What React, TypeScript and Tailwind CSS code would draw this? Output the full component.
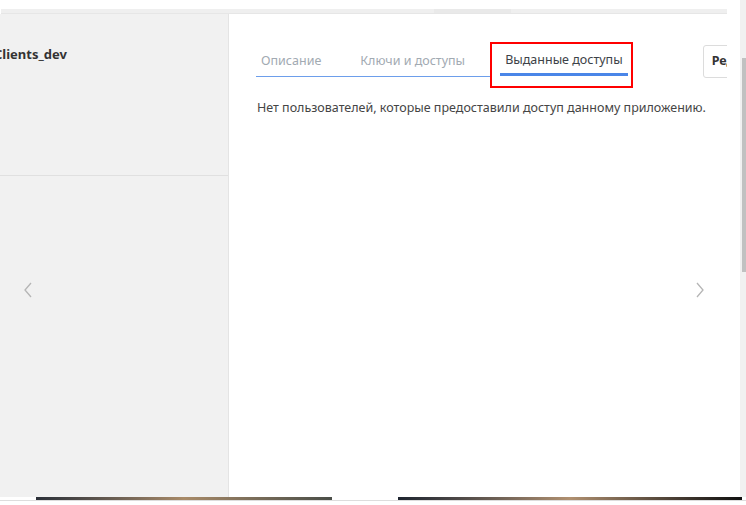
export default function App() {
    const tabs = ["Описание", "Ключи и доступы"]

    return (
        <div className="relative w-[746px] h-[505px] overflow-hidden bg-white text-[12.5px] text-[#444]" style={{ fontFamily: '"Noto Sans", "Open Sans", sans-serif' }}>
            <div className="flex h-[497px]">
                <div className="flex flex-col w-[740px]">
                    <div className="h-[9px]" />
                    <div className="flex ml-[1px] w-[726px] h-[5px] bg-[#efefef] border-b border-[#e6e6e6]">
                        <div className="ml-[433px] w-[77px] h-full bg-[#e9e9e9]" />
                    </div>
                    <div className="flex flex-1 min-h-0">
                        {/* left panel */}
                        <div className="flex flex-col w-[229px] bg-[#f1f1f1] border-r border-[#e4e4e4]">
                            <div className="h-[162px] border-b border-[#e0e0e0]">
                                <div className="ml-[-6px] mt-[31px] font-bold text-[13px] text-[#333] leading-[18px]">Clients_dev</div>
                            </div>
                            <div className="flex flex-1 items-start pl-[23px] pt-[106px]">
                                <svg width="10" height="16" viewBox="0 0 10 16" fill="none" stroke="#b5b5b5" strokeWidth="1.3">
                                    <polyline points="8,1 2,8 8,15" />
                                </svg>
                            </div>
                        </div>

                        {/* main panel */}
                        <div className="relative flex flex-col w-[498px] overflow-hidden">
                            <div className="flex items-start pt-[31px] pl-[27px]">
                                <div className="flex items-end">
                                    <div className="flex gap-[29px] pr-[20px] border-b border-[#6d9eeb]">
                                        {tabs.map((t) => (
                                            <div key={t} className="px-[5px] pt-[5px] pb-[5px] leading-[20px] text-[#a2aab2] whitespace-nowrap">{t}</div>
                                        ))}
                                    </div>
                                    <div className="ml-[10px] px-[5px] pt-[5px] pb-[3px] mb-[1px] leading-[20px] text-[#3d4248] whitespace-nowrap border-b-[3px] border-[#4a86e8]">Выданные доступы</div>
                                </div>
                                <div className="ml-[75px] shrink-0 h-[33px] px-[8px] flex items-center border border-[#dcdcdc] rounded-[3px] font-bold text-[#333] whitespace-nowrap">Редактировать</div>
                            </div>
                            <div className="pl-[28px] mt-[21px] leading-[18px] text-[#454545] whitespace-nowrap">Нет пользователей, которые предоставили доступ данному приложению.</div>
                            <div className="flex flex-1 items-center justify-end pr-[22px] pb-[34px]">
                                <svg width="10" height="16" viewBox="0 0 10 16" fill="none" stroke="#b5b5b5" strokeWidth="1.3">
                                    <polyline points="2,1 8,8 2,15" />
                                </svg>
                            </div>
                            {/* annotation */}
                            <div className="absolute left-[261px] top-[28px] w-[143px] h-[46px] border-2 border-[#ff0000]" />
                        </div>
                    </div>
                </div>

                {/* scrollbar */}
                <div className="w-[6px] bg-[#f1f1f1] pt-[58px] pl-[2px]">
                    <div className="w-[4px] h-[214px] bg-[#c1c1c1]" />
                </div>
            </div>
            <div className="flex h-[3px]">
                <div className="ml-[36px] w-[296px] bg-linear-to-r from-[#2b3038] via-[#a88a68] to-[#4a4e48]" />
                <div className="ml-[66px] w-[344px] bg-linear-to-r from-[#1e2530] via-[#b09070] to-[#111]" />
            </div>
            <div className="h-[5px] border-t border-[#ddd]" />
        </div>
    )
}
